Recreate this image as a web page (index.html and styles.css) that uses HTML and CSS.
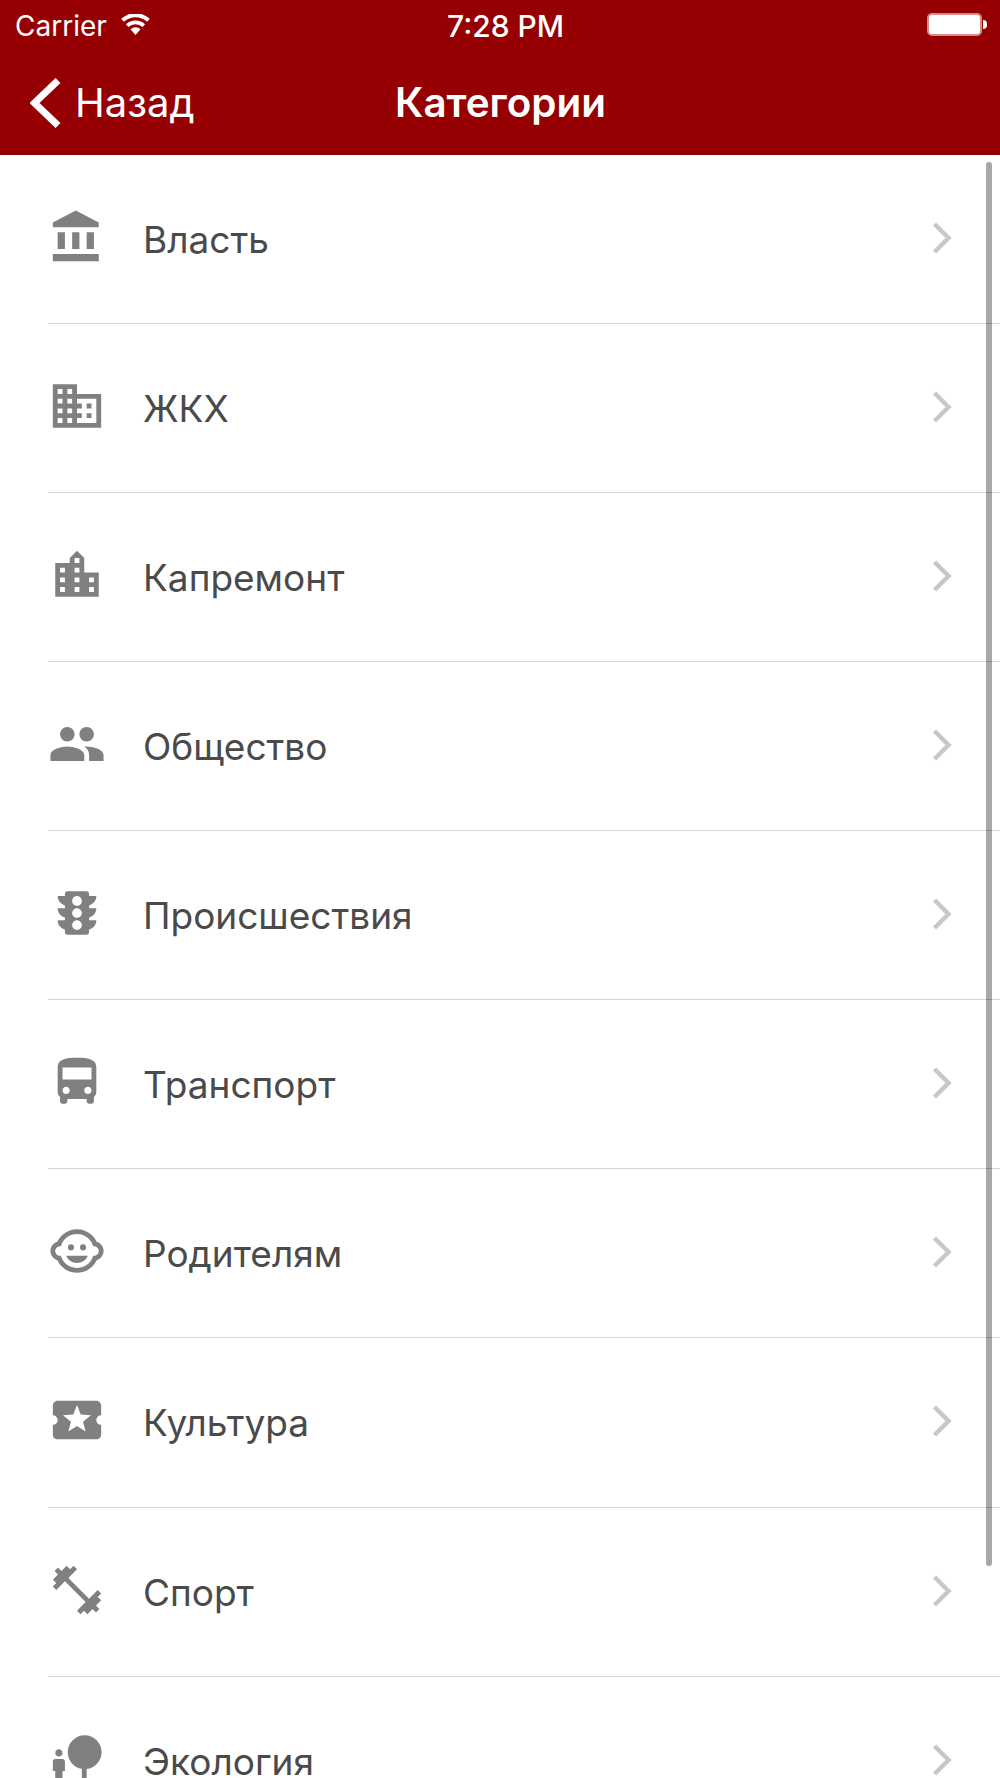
FILE: index.html
```html
<html>
<head>
<title>Категории</title>
<link rel="stylesheet" href="styles.css">
</head>
<body>
<div class="header">
  <div class="statusbar">
    <div class="carrier">
      <span>Carrier</span>
      <svg class="wifi" viewBox="0 0 31 21"><path d="M15.5 21 L10.5 15.2 A7.6 7.6 0 0 1 20.5 15.2 Z"/><path d="M8.4 12.9 L6 10.2 A14 14 0 0 1 25 10.2 L22.6 12.9 A10.6 10.6 0 0 0 8.4 12.9 Z"/><path d="M3.9 7.8 L1.2 4.8 A21 21 0 0 1 29.8 4.8 L27.1 7.8 A17.2 17.2 0 0 0 3.9 7.8 Z"/></svg>
    </div>
    <div class="time">7:28 PM</div>
    <div class="battery"><div class="battery-body"></div><div class="battery-nub"></div></div>
  </div>
  <div class="navbar">
    <div class="back">
      <svg class="back-arrow" viewBox="0 0 31 50"><path d="M28 2.5 L4.5 25 L28 47.5" /></svg>
      <span>Назад</span>
    </div>
    <div class="title">Категории</div>
  </div>
</div>

<div class="list">
  <div class="scroll-thumb"></div>

  <div class="row">
    <svg class="icon" viewBox="0 0 24 24"><path d="M4 10v7h3v-7H4zm6 0v7h3v-7h-3zM2 22h19v-3H2v3zm14-12v7h3v-7h-3zm-4.5-9L2 6v2h19V6l-9.5-5z"/></svg>
    <span class="label">Власть</span>
    <svg class="chevron" viewBox="0 0 20 32"><path d="M2.5 2 L16.5 16 L2.5 30"/></svg>
  </div>

  <div class="row">
    <svg class="icon" viewBox="0 0 24 24"><path d="M12 7V3H2v18h20V7H12zM6 19H4v-2h2v2zm0-4H4v-2h2v2zm0-4H4V9h2v2zm0-4H4V5h2v2zm4 12H8v-2h2v2zm0-4H8v-2h2v2zm0-4H8V9h2v2zm0-4H8V5h2v2zm10 12h-8v-2h2v-2h-2v-2h2v-2h-2V9h8v10zm-2-8h-2v2h2v-2zm0 4h-2v2h2v-2z"/></svg>
    <span class="label">ЖКХ</span>
    <svg class="chevron" viewBox="0 0 20 32"><path d="M2.5 2 L16.5 16 L2.5 30"/></svg>
  </div>

  <div class="row">
    <svg class="icon" viewBox="0 0 24 24"><path d="M15 11V5l-3-3-3 3v2H3v14h18V11h-6zm-8 8H5v-2h2v2zm0-4H5v-2h2v2zm0-4H5V9h2v2zm6 8h-2v-2h2v2zm0-4h-2v-2h2v2zm0-4h-2V9h2v2zm0-4h-2V5h2v2zm6 12h-2v-2h2v2zm0-4h-2v-2h2v2z"/></svg>
    <span class="label">Капремонт</span>
    <svg class="chevron" viewBox="0 0 20 32"><path d="M2.5 2 L16.5 16 L2.5 30"/></svg>
  </div>

  <div class="row">
    <svg class="icon" viewBox="0 0 24 24"><path d="M16 11c1.66 0 2.99-1.34 2.99-3S17.66 5 16 5c-1.66 0-3 1.34-3 3s1.34 3 3 3zm-8 0c1.66 0 2.99-1.34 2.99-3S9.66 5 8 5C6.34 5 5 6.34 5 8s1.34 3 3 3zm0 2c-2.33 0-7 1.17-7 3.5V19h14v-2.5c0-2.33-4.67-3.5-7-3.5zm8 0c-.29 0-.62.02-.97.05 1.16.84 1.97 1.97 1.97 3.45V19h6v-2.5c0-2.33-4.67-3.5-7-3.5z"/></svg>
    <span class="label">Общество</span>
    <svg class="chevron" viewBox="0 0 20 32"><path d="M2.5 2 L16.5 16 L2.5 30"/></svg>
  </div>

  <div class="row">
    <svg class="icon" viewBox="0 0 24 24"><path d="M20 10h-3V8.86c1.72-.45 3-2 3-3.86h-3V4c0-.55-.45-1-1-1H8c-.55 0-1 .45-1 1v1H4c0 1.86 1.28 3.41 3 3.86V10H4c0 1.86 1.28 3.41 3 3.86V15H4c0 1.86 1.28 3.41 3 3.86V20c0 .55.45 1 1 1h8c.55 0 1-.45 1-1v-1.14c1.72-.45 3-2 3-3.86h-3v-1.14c1.72-.45 3-2 3-3.86zm-8 9c-1.11 0-2-.9-2-2s.89-2 2-2c1.1 0 2 .9 2 2s-.89 2-2 2zm0-5c-1.11 0-2-.9-2-2s.89-2 2-2c1.1 0 2 .9 2 2s-.89 2-2 2zm0-5c-1.11 0-2-.9-2-2 0-1.11.89-2 2-2 1.1 0 2 .89 2 2 0 1.1-.89 2-2 2z"/></svg>
    <span class="label">Происшествия</span>
    <svg class="chevron" viewBox="0 0 20 32"><path d="M2.5 2 L16.5 16 L2.5 30"/></svg>
  </div>

  <div class="row">
    <svg class="icon" viewBox="0 0 24 24"><path d="M4 16c0 .88.39 1.67 1 2.22V20c0 .55.45 1 1 1h1c.55 0 1-.45 1-1v-1h8v1c0 .55.45 1 1 1h1c.55 0 1-.45 1-1v-1.78c.61-.55 1-1.34 1-2.22V6c0-3.5-3.58-4-8-4s-8 .5-8 4v10zm3.5 1c-.83 0-1.5-.67-1.5-1.5S6.67 14 7.5 14s1.5.67 1.5 1.5S8.33 17 7.5 17zm9 0c-.83 0-1.5-.67-1.5-1.5s.67-1.5 1.5-1.5 1.5.67 1.5 1.5-.67 1.5-1.5 1.5zm1.5-6H6V6h12v5z"/></svg>
    <span class="label">Транспорт</span>
    <svg class="chevron" viewBox="0 0 20 32"><path d="M2.5 2 L16.5 16 L2.5 30"/></svg>
  </div>

  <div class="row">
    <svg class="icon" viewBox="0 0 24 24"><circle cx="14.5" cy="10.5" r="1.25"/><circle cx="9.5" cy="10.5" r="1.25"/><path d="M22.94 12.66c.04-.21.06-.43.06-.66s-.02-.45-.06-.66c-.25-1.51-1.36-2.74-2.81-3.17-.53-1.12-1.28-2.1-2.19-2.91C16.36 3.85 14.28 3 12 3s-4.36.85-5.94 2.26c-.92.81-1.67 1.8-2.19 2.91-1.45.43-2.56 1.65-2.81 3.17-.04.21-.06.43-.06.66s.02.45.06.66c.25 1.51 1.36 2.74 2.81 3.17.52 1.11 1.27 2.09 2.17 2.89C7.62 20.14 9.71 21 12 21s4.38-.86 5.97-2.28c.9-.8 1.65-1.79 2.17-2.89 1.44-.43 2.55-1.65 2.8-3.17zM19 14c-.1 0-.19-.02-.29-.03-.2.67-.49 1.29-.86 1.86C16.6 17.74 14.45 19 12 19s-4.6-1.26-5.85-3.17c-.37-.57-.66-1.19-.86-1.86-.1.01-.19.03-.29.03-1.1 0-2-.9-2-2s.9-2 2-2c.1 0 .19.02.29.03.2-.67.49-1.29.86-1.86C7.4 6.26 9.55 5 12 5s4.6 1.26 5.85 3.17c.37.57.66 1.19.86 1.86.1-.01.19-.03.29-.03 1.1 0 2 .9 2 2s-.9 2-2 2zM7.5 14c.76 1.77 2.49 3 4.5 3s3.74-1.23 4.5-3h-9z"/></svg>
    <span class="label">Родителям</span>
    <svg class="chevron" viewBox="0 0 20 32"><path d="M2.5 2 L16.5 16 L2.5 30"/></svg>
  </div>

  <div class="row">
    <svg class="icon" viewBox="0 0 24 24"><path d="M20 12c0-1.1.9-2 2-2V6c0-1.1-.9-2-2-2H4c-1.1 0-1.99.9-1.99 2v4c1.1 0 1.99.9 1.99 2s-.89 2-2 2v4c0 1.1.9 2 2 2h16c1.1 0 2-.9 2-2v-4c-1.1 0-2-.9-2-2zm-4.42 4.8L12 14.5l-3.58 2.3 1.08-4.12-3.29-2.69 4.24-.25L12 5.8l1.54 3.95 4.24.25-3.29 2.69 1.09 4.11z"/></svg>
    <span class="label">Культура</span>
    <svg class="chevron" viewBox="0 0 20 32"><path d="M2.5 2 L16.5 16 L2.5 30"/></svg>
  </div>

  <div class="row">
    <svg class="icon" viewBox="0 0 24 24"><path d="M20.57 14.86L22 13.43 20.57 12 17 15.57 8.43 7 12 3.43 10.57 2 9.14 3.43 7.71 2 5.57 4.14 4.14 2.71 2.71 4.14l1.43 1.43L2 7.71l1.43 1.43L2 10.57 3.43 12 7 8.43 15.57 17 12 20.57 13.43 22l1.43-1.43L16.29 22l2.14-2.14 1.43 1.43 1.43-1.43-1.43-1.43L22 16.29z"/></svg>
    <span class="label">Спорт</span>
    <svg class="chevron" viewBox="0 0 20 32"><path d="M2.5 2 L16.5 16 L2.5 30"/></svg>
  </div>

  <div class="row">
    <svg class="icon" viewBox="0 0 24 24"><path d="M22.17 9.17c0-3.87-3.13-7-7-7s-7 3.13-7 7c0 3.47 2.52 6.34 5.83 6.89V20H6v-3h1v-4c0-.55-.45-1-1-1H3c-.55 0-1 .45-1 1v4h1v5h16v-2h-3v-3.88c3.47-.41 6.17-3.36 6.17-6.95zM4.5 11c.83 0 1.5-.67 1.5-1.5S5.33 8 4.5 8 3 8.67 3 9.5 3.67 11 4.5 11z"/></svg>
    <span class="label">Экология</span>
    <svg class="chevron" viewBox="0 0 20 32"><path d="M2.5 2 L16.5 16 L2.5 30"/></svg>
  </div>
</div>
</body>
</html>
```

FILE: styles.css
```css
html, body { margin: 0; height: 100%; overflow: hidden; background: white; }
body { font-family: Inter, "Noto Sans", sans-serif; }

.header { height: 155px; background: #960002; color: white; }

.statusbar { height: 52px; display: flex; align-items: center; justify-content: space-between; position: relative; padding: 0 13px 0 15px; font-size: 28px; }
.carrier { display: flex; align-items: center; gap: 13px; }
.wifi { width: 31px; height: 21px; fill: white; margin-top: -4px; }
.time { position: absolute; left: 447px; font-size: 30px; font-weight: 500; }
.battery { display: flex; align-items: center; margin-top: -3px; }
.battery-body { width: 51px; height: 19px; background: white; border: 2px solid #d98a8a; border-radius: 5px; }
.battery-nub { width: 4px; height: 9px; margin-left: 1px; background: white; border-radius: 0 4px 4px 0; }

.navbar { height: 103px; display: flex; align-items: center; position: relative; font-size: 40px; }
.back { display: flex; align-items: center; gap: 14px; padding-left: 30px; margin-top: -2px; }
.back-arrow { width: 31px; height: 50px; fill: none; stroke: white; stroke-width: 7; }
.title { position: absolute; left: 395px; font-size: 40.4px; font-weight: 600; margin-top: -2px; }

.list { position: relative; }
.scroll-thumb { position: absolute; top: 7px; right: 8px; width: 6px; height: 1404px; background: rgba(0, 0, 0, 0.34); border-radius: 3px; }

.row { display: flex; align-items: center; height: 168.07px; margin-left: 48px; border-bottom: 1px solid #d5d5d5; padding-right: 48px; }
.icon { width: 58px; height: 58px; fill: #808080; margin-bottom: 4px; flex: none; }
.label { margin-left: 37px; font-size: 37px; color: #4a4a4a; flex: 1; margin-top: 1px; }
.chevron { width: 20px; height: 32px; fill: none; stroke: #c7c7cc; stroke-width: 4.5; flex: none; margin-bottom: 2px; }
```
